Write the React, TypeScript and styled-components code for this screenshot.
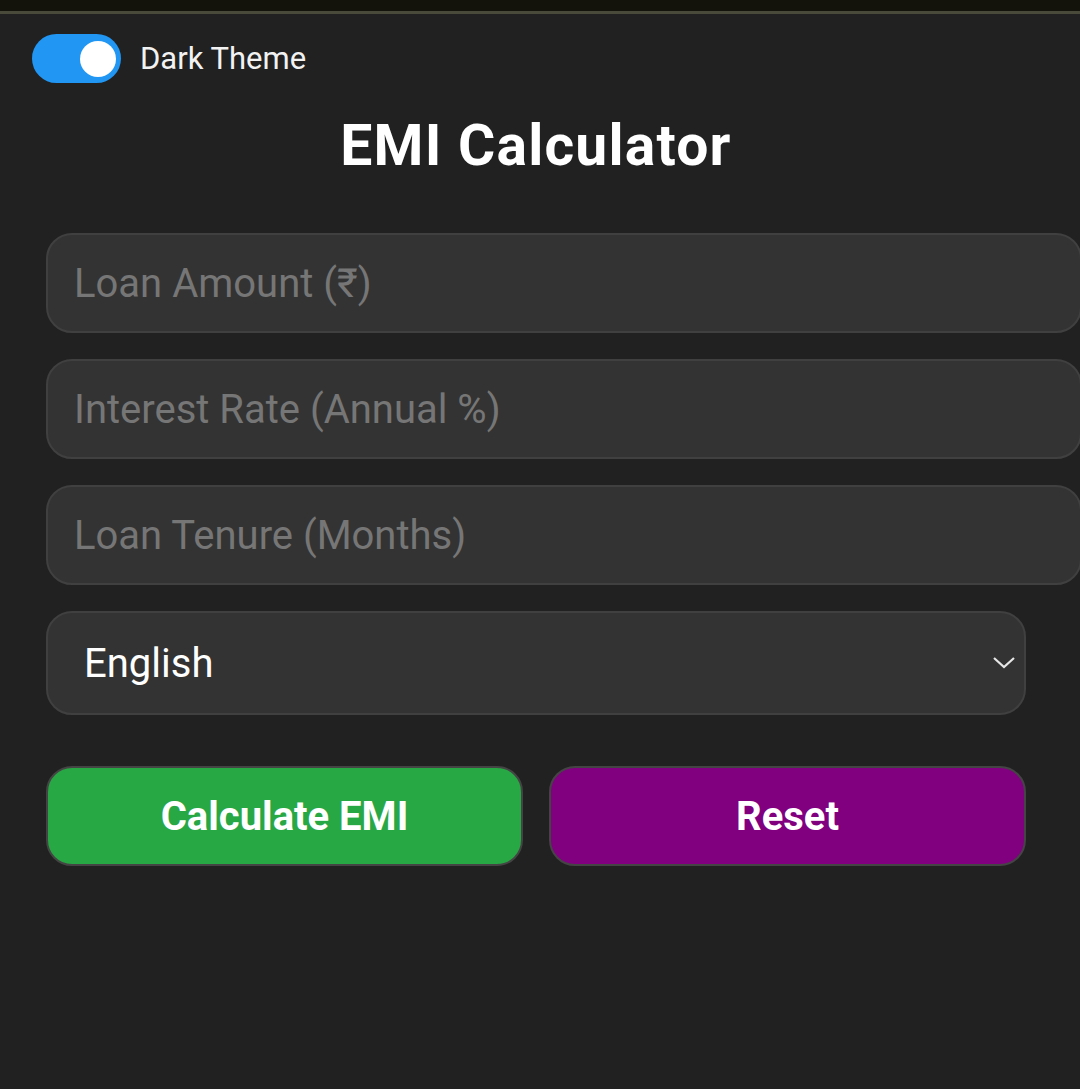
import React, { useState } from "react";
import styled, { createGlobalStyle } from "styled-components";

const Global = createGlobalStyle`
  html, body { margin: 0; padding: 0; background: #212121; }
  body { font-family: Roboto, "Noto Sans", Arial, sans-serif; color: #fff; }
  * { -webkit-font-smoothing: antialiased; }
`;

const Page = styled.div`
  min-height: 1089px;
  background: #212121;
  overflow: hidden;
`;

const TopBar = styled.div`
  height: 11px;
  background: #13130b;
  border-bottom: 3px solid #4a4a3b;
`;

const ToggleRow = styled.label`
  display: flex;
  align-items: center;
  gap: 19px;
  margin: 20px 0 0 32px;
  height: 49px;
  cursor: pointer;
`;

const Track = styled.span<{ $on: boolean }>`
  display: flex;
  align-items: center;
  justify-content: ${(p) => (p.$on ? "flex-end" : "flex-start")};
  box-sizing: border-box;
  width: 89px;
  height: 49px;
  padding: 0 5px 0 6px;
  border-radius: 25px;
  background: ${(p) => (p.$on ? "#2196f3" : "#777")};
`;

const Knob = styled.span`
  width: 36px;
  height: 36px;
  border-radius: 50%;
  background: #fff;
`;

const ToggleText = styled.span`
  font-size: 31px;
  color: #f2f2f2;
`;

const Container = styled.div`
  width: 980px;
  margin-left: 46px;
  display: flex;
  flex-direction: column;
`;

const Title = styled.h1`
  margin: 31px 0 55px;
  text-align: center;
  font-size: 57px;
  letter-spacing: 1.2px;
  font-weight: 700;
  color: #fff;
  line-height: 64px;
`;

const Field = styled.input`
  box-sizing: content-box;
  width: 100%;
  height: 96px;
  padding: 0 26px;
  margin: 0 0 26px;
  border: 2px solid #404040;
  border-radius: 26px;
  background: #333333;
  color: #fff;
  font-family: Roboto, Arial, sans-serif;
  font-size: 40px;
  outline: none;
  &::placeholder { color: #767676; }
`;

const SelectWrap = styled.div`
  position: relative;
  width: 980px;
  margin-bottom: 51px;
`;

const Select = styled.select`
  appearance: none;
  -webkit-appearance: none;
  box-sizing: border-box;
  width: 100%;
  height: 104px;
  padding: 0 0 0 36px;
  border: 2px solid #404040;
  border-radius: 26px;
  background: #333333;
  color: #fff;
  font-family: Roboto, Arial, sans-serif;
  font-size: 40px;
  outline: none;
`;

const Chevron = styled.svg`
  position: absolute;
  right: 10px;
  top: 45px;
  pointer-events: none;
`;

const ButtonRow = styled.div`
  display: grid;
  grid-template-columns: 1fr 1fr;
  gap: 26px;
  width: 980px;
`;

const Button = styled.button<{ $bg: string }>`
  box-sizing: border-box;
  height: 100px;
  border: 2px solid #444;
  border-radius: 26px;
  background: ${(p) => p.$bg};
  color: #fff;
  font-family: Roboto, Arial, sans-serif;
  font-size: 40px;
  font-weight: 700;
  cursor: pointer;
`;

export default function App() {
  const [dark, setDark] = useState(true);
  return (
    <Page>
      <Global />
      <TopBar />
      <ToggleRow onClick={() => setDark(!dark)}>
        <Track $on={dark}>
          <Knob />
        </Track>
        <ToggleText>Dark Theme</ToggleText>
      </ToggleRow>
      <Container>
        <Title>EMI Calculator</Title>
        <Field placeholder="Loan Amount (₹)" />
        <Field placeholder="Interest Rate (Annual %)" />
        <Field placeholder="Loan Tenure (Months)" />
        <SelectWrap>
          <Select defaultValue="en">
            <option value="en">English</option>
            <option value="hi">हिन्दी</option>
          </Select>
          <Chevron width="24" height="14" viewBox="0 0 24 14">
            <path d="M2 2 L12 11 L22 2" fill="none" stroke="#e6e6e6" strokeWidth="2.2" />
          </Chevron>
        </SelectWrap>
        <ButtonRow>
          <Button $bg="#28a745">Calculate EMI</Button>
          <Button $bg="#800080">Reset</Button>
        </ButtonRow>
      </Container>
    </Page>
  );
}
